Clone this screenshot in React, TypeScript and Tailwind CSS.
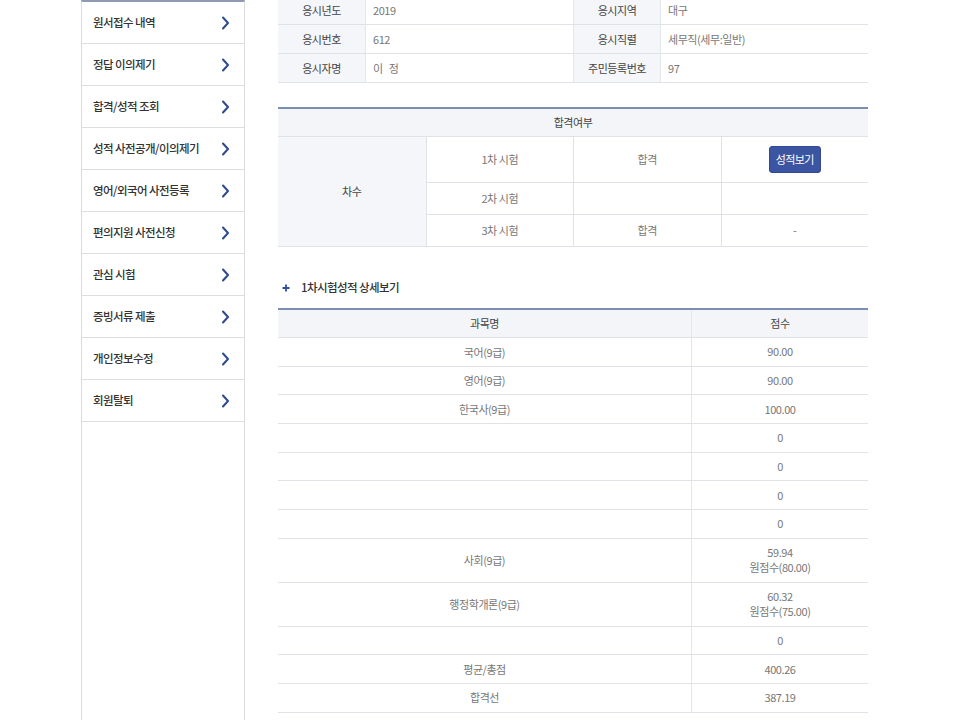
import React from "react";

const menu = [
  "원서접수 내역",
  "정답 이의제기",
  "합격/성적 조회",
  "성적 사전공개/이의제기",
  "영어/외국어 사전등록",
  "편의지원 사전신청",
  "관심 시험",
  "증빙서류 제출",
  "개인정보수정",
  "회원탈퇴",
];

const scores: { name: string; val: string[] }[] = [
  { name: "국어(9급)", val: ["90.00"] },
  { name: "영어(9급)", val: ["90.00"] },
  { name: "한국사(9급)", val: ["100.00"] },
  { name: "", val: ["0"] },
  { name: "", val: ["0"] },
  { name: "", val: ["0"] },
  { name: "", val: ["0"] },
  { name: "사회(9급)", val: ["59.94", "원점수(80.00)"] },
  { name: "행정학개론(9급)", val: ["60.32", "원점수(75.00)"] },
  { name: "", val: ["0"] },
  { name: "평균/총점", val: ["400.26"] },
  { name: "합격선", val: ["387.19"] },
];

function Chevron() {
  return (
    <svg width="9" height="14" viewBox="0 0 9 14" fill="none">
      <path d="M2 1.5 L7 7 L2 12.5" stroke="#2c4a8c" strokeWidth="2" strokeLinecap="round" strokeLinejoin="round" />
    </svg>
  );
}

function InfoRow({ a, av, b, bv }: { a: string; av: string; b: string; bv: string }) {
  return (
    <div className="grid grid-cols-[88px_207px_88px_207px] h-[29px] border-b border-[#dfe2e7]">
      <div className="bg-[#f4f6f9] flex items-center justify-center text-[#444] border-r border-[#e3e6eb]">{a}</div>
      <div className="flex items-center pl-[7px] text-[#777] whitespace-pre">{av}</div>
      <div className="bg-[#f4f6f9] flex items-center justify-center text-[#444] border-x border-[#e3e6eb]">{b}</div>
      <div className="flex items-center pl-[7px] text-[#777]">{bv}</div>
    </div>
  );
}

export default function App() {
  return (
    <div className="w-[960px] h-[720px] overflow-hidden bg-white flex font-['Noto_Sans_CJK_KR','Noto_Sans',sans-serif] text-[11px] tracking-[-0.04em]">
      <aside className="ml-[81px] w-[164px] shrink-0 border-x border-[#dcdcdc] border-t-2 border-t-[#8d9ab0]">
        {menu.map((m) => (
          <div key={m} className="h-[42px] border-b border-[#dedede] flex items-center justify-between pl-[11px] pr-[14px]">
            <span className="text-[11.5px] font-medium text-[#333] tracking-[-0.05em]">{m}</span>
            <Chevron />
          </div>
        ))}
      </aside>

      <main className="ml-[33px] w-[590px] shrink-0 -mt-[6px] flex flex-col">
        <div className="border-t-2 border-[#7a8fb3]">
          <InfoRow a="응시년도" av="2019" b="응시지역" bv="대구" />
          <InfoRow a="응시번호" av="612" b="응시직렬" bv="세무직(세무:일반)" />
          <InfoRow a="응시자명" av="이   정" b="주민등록번호" bv="97" />
        </div>

        <div className="mt-[24px] border-t-2 border-[#7a8fb3]">
          <div className="h-[28px] bg-[#f3f5f8] border-b border-[#dfe2e7] flex items-center justify-center text-[#444]">합격여부</div>
          <div className="grid grid-cols-4 grid-rows-[46px_32px_32px] text-[#777]">
            <div className="row-span-3 bg-[#f4f6f9] border-b border-[#dfe2e7] flex items-center justify-center text-[#444]">차수</div>
            <div className="border-l border-b border-[#dfe2e7] flex items-center justify-center">1차 시험</div>
            <div className="border-l border-b border-[#dfe2e7] flex items-center justify-center">합격</div>
            <div className="border-l border-b border-[#dfe2e7] flex items-center justify-center">
              <button className="h-[27px] w-[52px] rounded-[3px] bg-[#3b55a2] border border-[#31498f] text-white text-[11px] tracking-[-0.06em]">성적보기</button>
            </div>
            <div className="border-l border-b border-[#dfe2e7] flex items-center justify-center">2차 시험</div>
            <div className="border-l border-b border-[#dfe2e7]"></div>
            <div className="border-l border-b border-[#dfe2e7]"></div>
            <div className="border-l border-b border-[#dfe2e7] flex items-center justify-center">3차 시험</div>
            <div className="border-l border-b border-[#dfe2e7] flex items-center justify-center">합격</div>
            <div className="border-l border-b border-[#dfe2e7] flex items-center justify-center">-</div>
          </div>
        </div>

        <div className="mt-[32px] h-[18px] flex items-center pl-[4px]">
          <svg width="8" height="8" viewBox="0 0 8 8">
            <path d="M4 0.5 V7.5 M0.5 4 H7.5" stroke="#2f4fa0" strokeWidth="1.8" />
          </svg>
          <span className="ml-[11px] text-[11.5px] font-medium text-[#333] tracking-[-0.05em]">1차시험성적 상세보기</span>
        </div>

        <div className="mt-[11px] border-t-2 border-[#7a8fb3]">
          <div className="grid grid-cols-[413px_177px] h-[28px] bg-[#f3f5f8] border-b border-[#dfe2e7] text-[#444]">
            <div className="flex items-center justify-center">과목명</div>
            <div className="flex items-center justify-center border-l border-[#e3e6eb]">점수</div>
          </div>
          {scores.map((s, i) => (
            <div
              key={i}
              className={
                s.val.length > 1
                  ? "grid grid-cols-[413px_177px] h-[44px] border-b border-[#dfe2e7] text-[#777]"
                  : "grid grid-cols-[413px_177px] h-[28.67px] border-b border-[#dfe2e7] text-[#777]"
              }
            >
              <div className="flex items-center justify-center">{s.name}</div>
              <div className="flex flex-col items-center justify-center border-l border-[#e3e6eb] leading-[15px]">
                {s.val.map((v) => (
                  <span key={v}>{v}</span>
                ))}
              </div>
            </div>
          ))}
        </div>
      </main>
    </div>
  );
}
